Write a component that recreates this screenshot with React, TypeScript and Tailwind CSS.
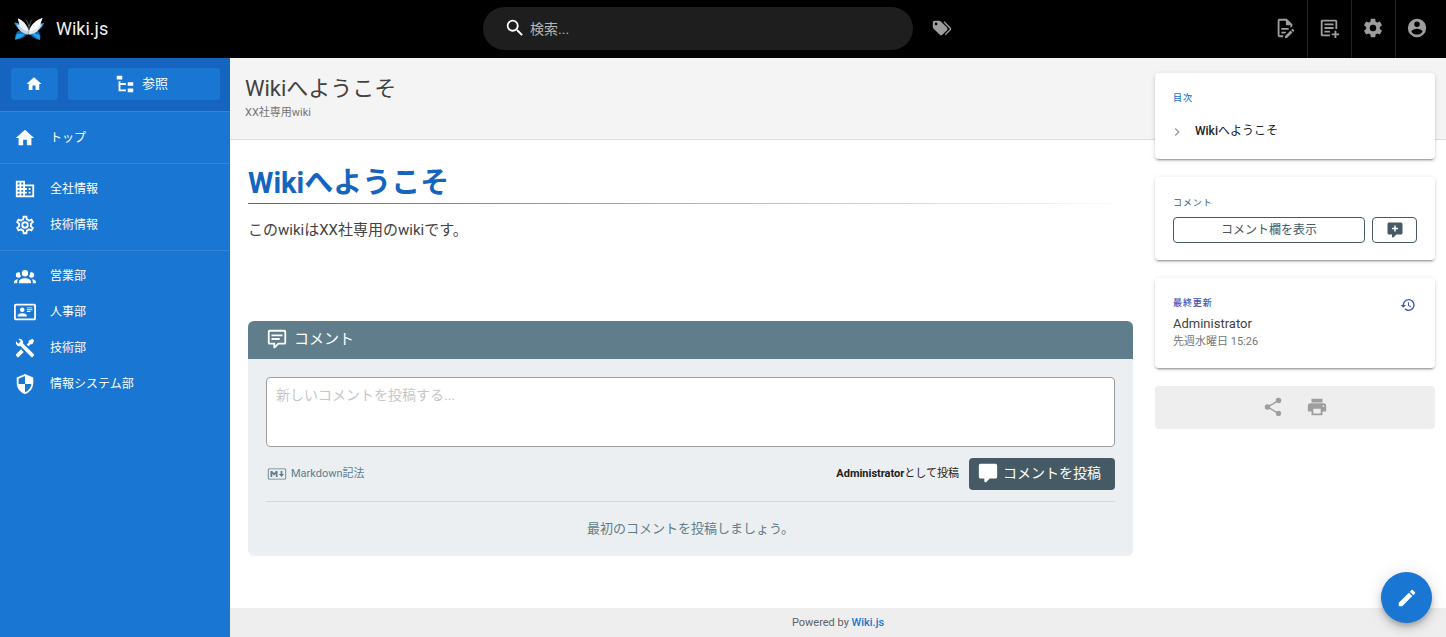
import { ReactNode } from 'react';

const icons = {
  home: 'M10,20V14H14V20H19V12H22L12,3L2,12H5V20H10Z',
  fileTree: 'M3,3H9V7H3V3M15,10H21V14H15V10M15,17H21V21H15V17M13,13H7V18H13V20H7L5,20V9H7V11H13V13Z',
  domain:
    'M18,15H16V17H18M18,11H16V13H18M20,19H12V17H14V15H12V13H14V11H12V9H20M10,7H8V5H10M10,11H8V9H10M10,15H8V13H10M10,19H8V17H10M6,7H4V5H6M6,11H4V9H6M6,15H4V13H6M6,19H4V17H6M12,7V3H2V21H22V7H12Z',
  cogOutline:
    'M12,8A4,4 0 0,1 16,12A4,4 0 0,1 12,16A4,4 0 0,1 8,12A4,4 0 0,1 12,8M12,10A2,2 0 0,0 10,12A2,2 0 0,0 12,14A2,2 0 0,0 14,12A2,2 0 0,0 12,10M10,22C9.75,22 9.54,21.82 9.5,21.58L9.13,18.93C8.5,18.68 7.96,18.34 7.44,17.94L4.95,18.95C4.73,19.03 4.46,18.95 4.34,18.73L2.34,15.27C2.21,15.05 2.27,14.78 2.46,14.63L4.57,12.97L4.5,12L4.57,11L2.46,9.37C2.27,9.22 2.21,8.95 2.34,8.73L4.34,5.27C4.46,5.05 4.73,4.96 4.95,5.05L7.44,6.05C7.96,5.66 8.5,5.32 9.13,5.07L9.5,2.42C9.54,2.18 9.75,2 10,2H14C14.25,2 14.46,2.18 14.5,2.42L14.87,5.07C15.5,5.32 16.04,5.66 16.56,6.05L19.05,5.05C19.27,4.96 19.54,5.05 19.66,5.27L21.66,8.73C21.79,8.95 21.73,9.22 21.54,9.37L19.43,11L19.5,12L19.43,13L21.54,14.63C21.73,14.78 21.79,15.05 21.66,15.27L19.66,18.73C19.54,18.95 19.27,19.04 19.05,18.95L16.56,17.95C16.04,18.34 15.5,18.68 14.87,18.93L14.5,21.58C14.46,21.82 14.25,22 14,22H10M11.25,4L10.88,6.61C9.68,6.86 8.62,7.5 7.85,8.39L5.44,7.35L4.69,8.65L6.8,10.2C6.4,11.37 6.4,12.64 6.8,13.8L4.68,15.36L5.43,16.66L7.86,15.62C8.63,16.5 9.68,17.14 10.87,17.38L11.24,20H12.76L13.13,17.39C14.32,17.14 15.37,16.5 16.14,15.62L18.57,16.66L19.32,15.36L17.2,13.81C17.6,12.64 17.6,11.37 17.2,10.2L19.31,8.65L18.56,7.35L16.15,8.39C15.38,7.5 14.32,6.86 13.12,6.62L12.75,4H11.25Z',
  cog:
    'M12,15.5A3.5,3.5 0 0,1 8.5,12A3.5,3.5 0 0,1 12,8.5A3.5,3.5 0 0,1 15.5,12A3.5,3.5 0 0,1 12,15.5M19.43,12.97C19.47,12.65 19.5,12.33 19.5,12C19.5,11.67 19.47,11.34 19.43,11L21.54,9.37C21.73,9.22 21.78,8.95 21.66,8.73L19.66,5.27C19.54,5.05 19.27,4.96 19.05,5.05L16.56,6.05C16.04,5.66 15.5,5.32 14.87,5.07L14.5,2.42C14.46,2.18 14.25,2 14,2H10C9.75,2 9.54,2.18 9.5,2.42L9.13,5.07C8.5,5.32 7.96,5.66 7.44,6.05L4.95,5.05C4.73,4.96 4.46,5.05 4.34,5.27L2.34,8.73C2.21,8.95 2.27,9.22 2.46,9.37L4.57,11C4.53,11.34 4.5,11.67 4.5,12C4.5,12.33 4.53,12.65 4.57,12.97L2.46,14.63C2.27,14.78 2.21,15.05 2.34,15.27L4.34,18.73C4.46,18.95 4.73,19.03 4.95,18.95L7.44,17.94C7.96,18.34 8.5,18.68 9.13,18.93L9.5,21.58C9.54,21.82 9.75,22 10,22H14C14.25,22 14.46,21.82 14.5,21.58L14.87,18.93C15.5,18.67 16.04,18.34 16.56,17.94L19.05,18.95C19.27,19.03 19.54,18.95 19.66,18.73L21.66,15.27C21.78,15.05 21.73,14.78 21.54,14.63L19.43,12.97Z',
  accountGroup:
    'M12,5.5A3.5,3.5 0 0,1 15.5,9A3.5,3.5 0 0,1 12,12.5A3.5,3.5 0 0,1 8.5,9A3.5,3.5 0 0,1 12,5.5M5,8C5.56,8 6.08,8.15 6.53,8.42C6.38,9.85 6.8,11.27 7.66,12.38C7.16,13.34 6.16,14 5,14A3,3 0 0,1 2,11A3,3 0 0,1 5,8M19,8A3,3 0 0,1 22,11A3,3 0 0,1 19,14C17.84,14 16.84,13.34 16.34,12.38C17.2,11.27 17.62,9.85 17.47,8.42C17.92,8.15 18.44,8 19,8M5.5,18.25C5.5,16.18 8.41,14.5 12,14.5C15.59,14.5 18.5,16.18 18.5,18.25V20H5.5V18.25M0,20V18.5C0,17.11 1.89,15.94 4.45,15.6C3.86,16.28 3.5,17.22 3.5,18.25V20H0M24,20H20.5V18.25C20.5,17.22 20.14,16.28 19.55,15.6C22.11,15.94 24,17.11 24,18.5V20Z',
  cardAccount:
    'M22,3H2C0.91,3.04 0.04,3.91 0,5V19C0.04,20.09 0.91,20.96 2,21H22C23.09,20.96 23.96,20.09 24,19V5C23.96,3.91 23.09,3.04 22,3M22,19H2V5H22V19M14,17V15.75C14,14.09 10.66,13.25 9,13.25C7.34,13.25 4,14.09 4,15.75V17H14M9,7A2.5,2.5 0 0,0 6.5,9.5A2.5,2.5 0 0,0 9,12A2.5,2.5 0 0,0 11.5,9.5A2.5,2.5 0 0,0 9,7M14,7V8H20V7H14M14,9V10H20V9H14M14,11V12H18V11H14Z',
  tools:
    'M21.71 20.29L20.29 21.71A1 1 0 0 1 18.88 21.71L7 9.85A3.81 3.81 0 0 1 6 10A4 4 0 0 1 2.22 4.7L4.76 7.24L5.29 6.71L6.71 5.29L7.24 4.76L4.7 2.22A4 4 0 0 1 10 6A3.81 3.81 0 0 1 9.85 7L21.71 18.88A1 1 0 0 1 21.71 20.29M2.29 18.88A1 1 0 0 0 2.29 20.29L3.71 21.71A1 1 0 0 0 5.12 21.71L10.59 16.25L7.76 13.42M20 2L16 4V6L13.83 8.17L15.83 10.17L18 8H20L22 4Z',
  security:
    'M12,12H19C18.47,16.11 15.72,19.78 12,20.92V12H5V6.3L12,3.19M12,1L3,5V11C3,16.55 6.84,21.73 12,23C17.16,21.73 21,16.55 21,11V5L12,1Z',
  magnify:
    'M9.5,3A6.5,6.5 0 0,1 16,9.5C16,11.11 15.41,12.59 14.44,13.73L14.71,14H15.5L20.5,19L19,20.5L14,15.5V14.71L13.73,14.44C12.59,15.41 11.11,16 9.5,16A6.5,6.5 0 0,1 3,9.5A6.5,6.5 0 0,1 9.5,3M9.5,5C7,5 5,7 5,9.5C5,12 7,14 9.5,14C12,14 14,12 14,9.5C14,7 12,5 9.5,5Z',
  tags:
    'M5.5,9A1.5,1.5 0 0,0 7,7.5A1.5,1.5 0 0,0 5.5,6A1.5,1.5 0 0,0 4,7.5A1.5,1.5 0 0,0 5.5,9M17.41,11.58C17.77,11.94 18,12.44 18,13C18,13.55 17.78,14.05 17.41,14.41L12.41,19.41C12.05,19.77 11.55,20 11,20C10.45,20 9.95,19.78 9.58,19.41L2.59,12.42C2.22,12.05 2,11.55 2,11V6C2,4.89 2.89,4 4,4H9C9.55,4 10.05,4.22 10.41,4.58L17.41,11.58M13.54,5.71L14.54,4.71L21.41,11.58C21.78,11.94 22,12.45 22,13C22,13.55 21.78,14.05 21.42,14.41L16.04,19.79L15.04,18.79L20.75,13L13.54,5.71Z',
  fileEdit:
    'M8,12H16V14H8V12M10,20H6V4H13V9H18V12.1L20,10.1V8L14,2H6A2,2 0 0,0 4,4V20A2,2 0 0,0 6,22H10V20M8,18H12.1L13,17.1V16H8V18M20.2,13C20.3,13 20.5,13.1 20.6,13.2L21.9,14.5C22.1,14.7 22.1,15.1 21.9,15.3L20.9,16.3L18.8,14.2L19.8,13.2C19.9,13.1 20,13 20.2,13M20.2,16.9L14.1,23H12V20.9L18.1,14.8L20.2,16.9Z',
  textPlus:
    'M13,19H5V5H19V13H21V5C21,3.9 20.11,3 19,3H5C3.9,3 3,3.9 3,5V19C3,20.11 3.9,21 5,21H13V19M7,7H17V9H7V7M7,11H17V13H7V11M7,15H13V17H7V15M18,15H20V18H23V20H20V23H18V20H15V18H18V15Z',
  account:
    'M12,19.2C9.5,19.2 7.29,17.92 6,16C6.03,14 10,12.9 12,12.9C14,12.9 17.97,14 18,16C16.71,17.92 14.5,19.2 12,19.2M12,5A3,3 0 0,1 15,8A3,3 0 0,1 12,11A3,3 0 0,1 9,8A3,3 0 0,1 12,5M12,2A10,10 0 0,0 2,12A10,10 0 0,0 12,22A10,10 0 0,0 22,12C22,6.47 17.5,2 12,2Z',
  chevronRight: 'M8.59,16.58L13.17,12L8.59,7.41L10,6L16,12L10,18L8.59,16.58Z',
  commentPlus:
    'M9,22A1,1 0 0,1 8,21V18H4A2,2 0 0,1 2,16V4C2,2.89 2.9,2 4,2H20A2,2 0 0,1 22,4V16A2,2 0 0,1 20,18H13.9L10.2,21.71C10,21.9 9.75,22 9.5,22H9M11,6V9H8V11H11V14H13V11H16V9H13V6H11Z',
  comment:
    'M9,22A1,1 0 0,1 8,21V18H4A2,2 0 0,1 2,16V4C2,2.89 2.9,2 4,2H20A2,2 0 0,1 22,4V16A2,2 0 0,1 20,18H13.9L10.2,21.71C10,21.9 9.75,22 9.5,22H9Z',
  commentText:
    'M9,22A1,1 0 0,1 8,21V18H4A2,2 0 0,1 2,16V4C2,2.89 2.9,2 4,2H20A2,2 0 0,1 22,4V16A2,2 0 0,1 20,18H13.9L10.2,21.71C10,21.9 9.75,22 9.5,22H9M10,16V19.08L13.08,16H20V4H4V16H10M6,7H18V9H6V7M6,11H15V13H6V11Z',
  history:
    'M13.5,8H12V13L16.28,15.54L17,14.33L13.5,12.25V8M13,3A9,9 0 0,0 4,12H1L4.96,16.03L9,12H6A7,7 0 0,1 13,5A7,7 0 0,1 20,12A7,7 0 0,1 13,19C11.07,19 9.32,18.21 8.06,16.94L6.64,18.36C8.27,20 10.5,21 13,21A9,9 0 0,0 22,12A9,9 0 0,0 13,3',
  share:
    'M18,16.08C17.24,16.08 16.56,16.38 16.04,16.85L8.91,12.7C8.96,12.47 9,12.24 9,12C9,11.76 8.96,11.53 8.91,11.3L15.96,7.19C16.5,7.69 17.21,8 18,8A3,3 0 0,0 21,5A3,3 0 0,0 18,2A3,3 0 0,0 15,5C15,5.24 15.04,5.47 15.09,5.7L8.04,9.81C7.5,9.31 6.79,9 6,9A3,3 0 0,0 3,12A3,3 0 0,0 6,15C6.79,15 7.5,14.69 8.04,14.19L15.16,18.34C15.11,18.55 15.08,18.77 15.08,19C15.08,20.61 16.39,21.91 18,21.91C19.61,21.91 20.92,20.61 20.92,19A2.92,2.92 0 0,0 18,16.08Z',
  printer:
    'M18,3H6V7H18M19,12A1,1 0 0,1 18,11A1,1 0 0,1 19,10A1,1 0 0,1 20,11A1,1 0 0,1 19,12M16,19H8V14H16M19,8H5A3,3 0 0,0 2,11V17H6V21H18V17H22V11A3,3 0 0,0 19,8Z',
  pencil:
    'M20.71,7.04C21.1,6.65 21.1,6 20.71,5.63L18.37,3.29C18,2.9 17.35,2.9 16.96,3.29L15.12,5.12L18.87,8.87M3,17.25V21H6.75L17.81,9.93L14.06,6.18L3,17.25Z',
  markdown:
    'M20.56 18H3.44C2.65 18 2 17.37 2 16.59V7.41C2 6.63 2.65 6 3.44 6H20.56C21.35 6 22 6.63 22 7.41V16.59C22 17.37 21.35 18 20.56 18M3.44 6.94C3.18 6.94 2.96 7.15 2.96 7.41V16.6C2.96 16.85 3.18 17.06 3.44 17.06H20.56C20.82 17.06 21.04 16.85 21.04 16.6V7.41C21.04 7.15 20.82 6.94 20.56 6.94H3.44M4.89 15.19V8.81H6.81L8.73 11.16L10.65 8.81H12.58V15.19H10.65V11.53L8.73 13.88L6.81 11.53V15.19H4.89M16.9 15.19L14 12.09H15.94V8.81H17.86V12.09H19.79L16.9 15.19Z',
};

type IconName = keyof typeof icons;

function Icon({ name, className = 'w-[22px] h-[22px]' }: { name: IconName; className?: string }) {
  return (
    <svg viewBox="0 0 24 24" fill="currentColor" aria-hidden="true" className={`shrink-0 ${className}`}>
      <path d={icons[name]} fillRule="evenodd" />
    </svg>
  );
}

function Logo() {
  return (
    <svg viewBox="0 0 30 24" aria-hidden="true" className="w-[30px] h-6 shrink-0">
      {/* blue wings behind */}
      <path d="M0 5.5L4 6L11 14L6 13.5C4 11.5 2 9 0 5.5Z" fill="#1b9be0" />
      <path d="M30 6L26 6.5L19 14L24 13.5C27 12 29 9 30 6Z" fill="#1b9be0" />
      <path d="M13 14L4 14C1.5 16 1 19 1 22.5C6 22.5 11 20.5 14 16Z" fill="#0a66a8" />
      <path d="M16 14L24 14C26 16 27 19 26 23C21 22.5 17.5 20 15 16Z" fill="#0a66a8" />
      <path d="M8 16.5L3 17L1 22.5C5 22 8 20 11 17.5Z" fill="#25a4ea" />
      <path d="M20 16L25.5 18L26 23C22.5 21 20 19 18 17Z" fill="#25a4ea" />
      {/* white wings in front */}
      <path d="M4 1.5C9 3.5 13 8 14.8 13V17.5C11 17.5 6.5 15 4.5 11.5L2.5 7.5L5.5 8Z" fill="#c6d0de" />
      <path d="M28.5 1C22 3 17 8 15.2 13L14.8 17.5C19 17.5 23.5 15 25.5 11.5L28 7.5L26 7.5Z" fill="#dfe6ef" />
      <path d="M4 1.5C9 3.5 13 8 14.5 14.5C10 13.5 6 11 5.5 8Z" fill="#eef2f7" />
      <path d="M28.5 1C22 3 17 8 15.5 14.5C20 13.5 25 11 26 7.5Z" fill="#fbfcfe" />
      <path d="M14.5 9C14 6 13.5 4 11.5 2.5M15.5 9C16 6 16.5 4 18 2.5" fill="none" stroke="#666d77" strokeWidth="0.8" />
      <path d="M15 7.5V13" stroke="#6b7686" strokeWidth="1" />
    </svg>
  );
}

const navGroups: { icon: IconName; label: string }[][] = [
  [{ icon: 'home', label: 'トップ' }],
  [
    { icon: 'domain', label: '全社情報' },
    { icon: 'cogOutline', label: '技術情報' },
  ],
  [
    { icon: 'accountGroup', label: '営業部' },
    { icon: 'cardAccount', label: '人事部' },
    { icon: 'tools', label: '技術部' },
    { icon: 'security', label: '情報システム部' },
  ],
];

const headerActions: { icon: IconName; label: string }[] = [
  { icon: 'fileEdit', label: 'ページ操作' },
  { icon: 'textPlus', label: '新規ページ' },
  { icon: 'cog', label: '管理' },
  { icon: 'account', label: 'アカウント' },
];

function Header() {
  return (
    <header className="grid grid-cols-3 h-[58px] bg-black text-[#9e9e9e]">
      <a href="#" className="flex items-center gap-3 pl-3.5 text-lg text-[#f0f0f0]">
        <Logo />
        Wiki.js
      </a>
      <div className="flex items-center pl-px pb-0.5">
        <label className="flex flex-1 items-center gap-1 h-[43px] min-w-0 rounded-full bg-[#1e1e1e] pl-[21px] text-white">
          <Icon name="magnify" />
          <input
            type="text"
            aria-label="検索"
            placeholder="検索..."
            className="flex-1 min-w-0 bg-transparent pt-0.5 text-sm outline-none placeholder:text-[#b5b5b5]"
          />
        </label>
        <button type="button" aria-label="タグ" className="flex justify-center w-[51px] pl-1.5">
          <Icon name="tags" />
        </button>
      </div>
      <div className="flex justify-end pr-[7px]">
        {headerActions.map(({ icon, label }, i) => (
          <button
            key={icon}
            type="button"
            aria-label={label}
            className={`flex items-center justify-center w-11 pb-0.5 ${i > 0 ? 'border-l border-[#212121] pr-px' : ''}`}
          >
            <Icon name={icon} />
          </button>
        ))}
      </div>
    </header>
  );
}

function Sidebar() {
  return (
    <nav className="w-[230px] shrink-0 bg-[#1976d2] text-xs text-white">
      <div className="flex gap-2.5 h-[53px] bg-[#1565c0] pl-[11px] pr-[10px] pt-2.5">
        <button type="button" aria-label="ホーム" className="flex items-center justify-center w-[47px] h-8 rounded bg-[#1976d2] pr-px">
          <Icon name="home" className="w-[18px] h-[18px]" />
        </button>
        <button type="button" className="flex flex-1 items-center justify-center gap-1.5 h-8 rounded bg-[#1976d2] pr-1.5 text-[13px]">
          <Icon name="fileTree" />
          参照
        </button>
      </div>
      {navGroups.map((group, i) => (
        <ul key={i} className={`border-t border-[#3485d9] pb-[7px] ${i === 0 ? 'pt-2' : 'pt-[7px]'}`}>
          {group.map(({ icon, label }) => (
            <li key={label}>
              <a href="#" className="flex items-center gap-3.5 h-9 pl-3.5">
                <Icon name={icon} />
                {label}
              </a>
            </li>
          ))}
        </ul>
      ))}
    </nav>
  );
}

function Card({ children }: { children: ReactNode }) {
  return (
    <section className="rounded bg-white px-[18px] shadow-[0_3px_1px_-2px_rgba(0,0,0,0.2),0_2px_2px_0_rgba(0,0,0,0.14),0_1px_5px_0_rgba(0,0,0,0.12)]">
      {children}
    </section>
  );
}

function PageAside() {
  return (
    <aside className="col-start-2 row-start-1 row-span-2 flex flex-col gap-[18px] pt-[15px] pr-[11px]">
      <Card>
        <h2 className="pt-[17px] text-[9px] leading-4 font-medium tracking-[0.1em] text-[#1976d2]">目次</h2>
        <a href="#welcome" className="flex items-center gap-2.5 mt-[13px] pb-[15px] text-xs leading-[25px] text-[#212121]">
          <Icon name="chevronRight" className="w-4 h-4 -ml-1 text-[#9e9e9e]" />
          <span>
            <span className="font-medium">Wiki</span>へようこそ
          </span>
        </a>
      </Card>
      <Card>
        <h2 className="pt-[18px] text-[9px] leading-4 tracking-[0.1em] text-[#455a64]">コメント</h2>
        <div className="flex gap-[7px] pt-[6px] pb-[17px] text-[#455a64]">
          <a href="#comments" className="flex flex-1 items-center justify-center h-[26px] rounded border border-[#455a64] text-xs">
            コメント欄を表示
          </a>
          <a href="#new-comment" aria-label="新しいコメント" className="flex items-center justify-center w-[45px] h-[26px] rounded border border-[#455a64]">
            <Icon name="commentPlus" className="w-[18px] h-[18px]" />
          </a>
        </div>
      </Card>
      <Card>
        <div className="flex justify-between pt-[17px]">
          <div>
            <h2 className="text-[9px] leading-4 font-medium tracking-[0.1em] text-[#3f51b5]">最終更新</h2>
            <p className="pt-1 text-[13px] leading-[18px] text-[#424242]">Administrator</p>
            <p className="pb-[18px] text-[11px] leading-[17px] text-[#757575]">先週水曜日 15:26</p>
          </div>
          <button type="button" aria-label="履歴" className="self-start pt-0.5 pr-px text-[#3f51b5]">
            <Icon name="history" className="w-4 h-4" />
          </button>
        </div>
      </Card>
      <div className="flex items-center justify-center gap-[22px] h-[43px] rounded-sm bg-[#eeeeee] pb-0.5 text-[#9e9e9e]">
        <button type="button" aria-label="共有">
          <Icon name="share" />
        </button>
        <button type="button" aria-label="印刷">
          <Icon name="printer" />
        </button>
      </div>
    </aside>
  );
}

function Comments() {
  return (
    <section id="comments" className="overflow-hidden rounded-md bg-[#eceff1]">
      <h2 className="flex items-center gap-1.5 h-[38px] bg-[#607d8b] pb-0.5 pl-[18px] text-[15px] text-white">
        <Icon name="commentText" />
        コメント
      </h2>
      <div className="px-[18px] pt-[18px]">
        <textarea
          id="new-comment"
          aria-label="新しいコメント"
          placeholder="新しいコメントを投稿する..."
          className="block w-full h-[70px] resize-none rounded border border-[#9e9e9e] bg-white px-[9px] py-[7px] text-sm leading-5 outline-none placeholder:text-[#c7c7c7]"
        />
        <div className="flex items-center pt-[11px] pb-[11px] text-[11px]">
          <a href="#" className="flex items-center gap-[3px] text-[#607d8b]">
            <Icon name="markdown" />
            Markdown記法
          </a>
          <p className="ml-auto mr-2.5 text-[#212121]">
            <strong className="font-bold">Administrator</strong>として投稿
          </p>
          <button type="button" className="flex items-center gap-1 h-8 rounded bg-[#455a64] pb-[3px] pl-2 pr-3.5 text-sm text-white">
            <Icon name="comment" />
            コメントを投稿
          </button>
        </div>
        <p className="border-t border-[#cfd8dc] pt-[17px] pb-[18px] text-center text-[13px] leading-[19px] text-[#607d8b]">
          最初のコメントを投稿しましょう。
        </p>
      </div>
    </section>
  );
}

function App() {
  return (
    <div className="flex flex-col min-h-screen bg-white font-['Roboto','Noto_Sans_CJK_JP',sans-serif]">
      <Header />
      <div className="flex flex-1">
        <Sidebar />
        <div className="flex flex-col flex-1 min-w-0">
          <main className="grid flex-1 grid-cols-[minmax(0,1fr)_291px] grid-rows-[82px_1fr]">
            {/* title band runs underneath the side column */}
            <div className="col-span-2 col-start-1 row-start-1 border-b border-[#dddddd] bg-[#f4f4f4] pl-[15px] pt-[17px]">
              <h1 className="text-[22px] leading-7 text-[#424242]">Wikiへようこそ</h1>
              <p className="text-[11px] leading-5 text-[#757575]">XX社専用wiki</p>
            </div>
            <article className="col-start-1 row-start-2 pl-[18px] pr-[22px] pt-[25px]">
              <h1 id="welcome" className="h-[38px] text-[29px] leading-9 font-bold text-[#1565c0]">
                Wikiへようこそ
              </h1>
              <div className="h-px bg-gradient-to-r from-[#1976d2] to-[#1976d2]/0" />
              <p className="pt-4 pb-[81px] text-[15px] leading-5 text-[#424242]">このwikiはXX社専用のwikiです。</p>
              <Comments />
            </article>
            <PageAside />
          </main>
          <footer className="h-[29px] bg-[#eeeeee] text-center text-[11px] leading-[29px] text-[#616161]">
            Powered by <a href="#" className="font-medium text-[#1976d2]">Wiki.js</a>
          </footer>
        </div>
      </div>
      <button
        type="button"
        aria-label="編集"
        className="fixed right-3.5 bottom-3.5 flex items-center justify-center w-[51px] h-[51px] rounded-full bg-[#1976d2] text-white shadow-[0_3px_5px_-1px_rgba(0,0,0,0.2),0_6px_10px_0_rgba(0,0,0,0.14),0_1px_18px_0_rgba(0,0,0,0.12)]"
      >
        <Icon name="pencil" />
      </button>
    </div>
  );
}

export default App;
